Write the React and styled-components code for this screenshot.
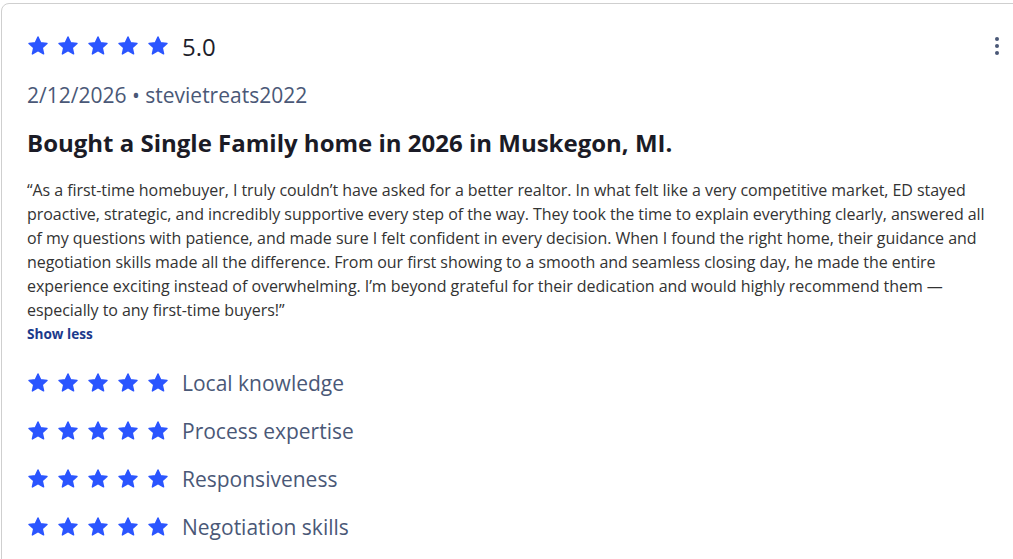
import React from 'react'
import styled, { createGlobalStyle } from 'styled-components'

const GlobalStyle = createGlobalStyle`
  body {
    margin: 0;
    background: #fff;
    font-family: 'Open Sans', 'Liberation Sans', sans-serif;
    overflow: hidden;
  }
`

const review = {
  rating: '5.0',
  date: '2/12/2026',
  author: 'stevietreats2022',
  title: 'Bought a Single Family home in 2026 in Muskegon, MI.',
  body:
    '\u201cAs a first-time homebuyer, I truly couldn\u2019t have asked for a better realtor. In what felt like a very competitive market, ED stayed proactive, strategic, and incredibly supportive every step of the way. They took the time to explain everything clearly, answered all of my questions with patience, and made sure I felt confident in every decision. When I found the right home, their guidance and negotiation skills made all the difference. From our first showing to a smooth and seamless closing day, he made the entire experience exciting instead of overwhelming. I\u2019m beyond grateful for their dedication and would highly recommend them \u2014 especially to any first-time buyers!\u201d',
  categories: ['Local knowledge', 'Process expertise', 'Responsiveness', 'Negotiation skills']
}

const Star = () => (
  <svg width='22' height='22' viewBox='0 0 24 24'>
    <path
      d='M12 2.2l2.9 6.3 6.9.7-5.2 4.6 1.5 6.8L12 17.1l-6.1 3.5 1.5-6.8-5.2-4.6 6.9-.7z'
      fill='#2b55ff'
      stroke='#2b55ff'
      strokeWidth='1.6'
      strokeLinejoin='round'
    />
  </svg>
)

const Stars = () => (
  <StarGroup>
    {[0, 1, 2, 3, 4].map(i => (
      <Star key={i} />
    ))}
  </StarGroup>
)

const App = () => {
  return (
    <Page>
      <GlobalStyle />
      <Card>
        <HeaderRow>
          <RatingLine>
            <Stars />
            <Score>{review.rating}</Score>
          </RatingLine>
          <MenuButton aria-label='More options'>
            <Dot />
            <Dot />
            <Dot />
          </MenuButton>
        </HeaderRow>
        <Meta>
          {review.date} • {review.author}
        </Meta>
        <Title>{review.title}</Title>
        <Body>{review.body}</Body>
        <ToggleLink>Show less</ToggleLink>
        <Categories>
          {review.categories.map(c => (
            <RatingLine key={c}>
              <Stars />
              <CategoryLabel>{c}</CategoryLabel>
            </RatingLine>
          ))}
        </Categories>
      </Card>
    </Page>
  )
}

const Page = styled.div`
  padding: 3px 0 0 1px;
`

const Card = styled.div`
  width: 1040px;
  box-sizing: border-box;
  border: 1px solid #cfcfcf;
  border-radius: 8px;
  padding: 26px 0 40px 25px;
`

const HeaderRow = styled.div`
  display: flex;
  align-items: center;
  justify-content: space-between;
  width: 972px;
  height: 32px;
`

const RatingLine = styled.div`
  display: flex;
  align-items: center;
  gap: 13px;
  height: 32px;
`

const StarGroup = styled.div`
  display: flex;
  gap: 8px;
  svg {
    display: block;
  }
`

const Score = styled.span`
  font-size: 24px;
  color: #1d1d2b;
`

const MenuButton = styled.button`
  display: flex;
  flex-direction: column;
  align-items: center;
  gap: 3px;
  background: none;
  border: none;
  padding: 0;
  cursor: pointer;
`

const Dot = styled.span`
  width: 4px;
  height: 4px;
  border-radius: 50%;
  background: #4a5877;
`

const Meta = styled.div`
  margin-top: 19px;
  font-size: 21px;
  line-height: 28px;
  color: #4a5877;
`

const Title = styled.h2`
  margin: 18px 0 0;
  font-size: 24px;
  line-height: 32px;
  font-weight: 700;
  color: #1b1b26;
`

const Body = styled.p`
  margin: 19px 0 0;
  width: 968px;
  font-size: 16px;
  line-height: 24px;
  letter-spacing: -0.05px;
  color: #333;
`

const ToggleLink = styled.button`
  display: block;
  margin-top: 2px;
  background: none;
  border: none;
  padding: 0;
  font-family: inherit;
  font-size: 13.6px;
  line-height: 20px;
  font-weight: 700;
  color: #1b3a8c;
  cursor: pointer;
`

const Categories = styled.div`
  display: flex;
  flex-direction: column;
  gap: 16px;
  margin-top: 23px;
`

const CategoryLabel = styled.span`
  font-size: 21px;
  color: #4a5877;
`

export default App
